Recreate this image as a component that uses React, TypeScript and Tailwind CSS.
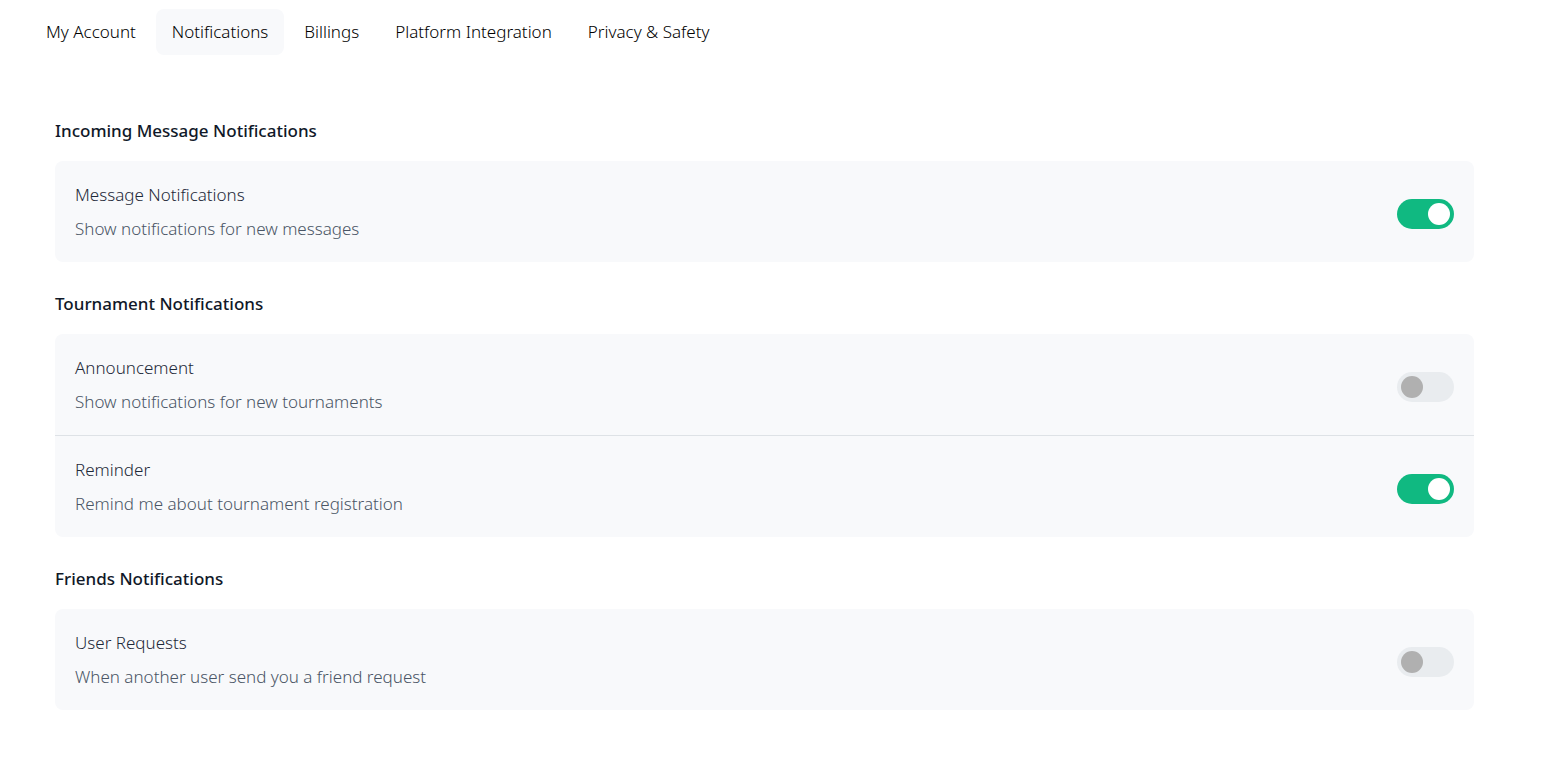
import { useState } from 'react';

type Setting = { id: string; title: string; description: string; enabled: boolean };
type Section = { title: string; settings: Setting[] };

const tabs = ['My Account', 'Notifications', 'Billings', 'Platform Integration', 'Privacy & Safety'];

const sections: Section[] = [
  {
    title: 'Incoming Message Notifications',
    settings: [
      { id: 'messages', title: 'Message Notifications', description: 'Show notifications for new messages', enabled: true },
    ],
  },
  {
    title: 'Tournament Notifications',
    settings: [
      { id: 'announcement', title: 'Announcement', description: 'Show notifications for new tournaments', enabled: false },
      { id: 'reminder', title: 'Reminder', description: 'Remind me about tournament registration', enabled: true },
    ],
  },
  {
    title: 'Friends Notifications',
    settings: [
      { id: 'requests', title: 'User Requests', description: 'When another user send you a friend request', enabled: false },
    ],
  },
];

function SettingRow({ setting }: { setting: Setting }) {
  const [enabled, setEnabled] = useState(setting.enabled);
  return (
    <div className="flex items-center justify-between px-5 pt-[17px] pb-4">
      <label htmlFor={setting.id} className="flex flex-col text-[17px] leading-[34px] font-light">
        <span className="text-gray-800">{setting.title}</span>
        <span className="text-gray-600">{setting.description}</span>
      </label>
      <input
        id={setting.id}
        type="checkbox"
        role="switch"
        checked={enabled}
        onChange={(e) => setEnabled(e.target.checked)}
        className="mt-1 flex h-[30px] w-[57px] shrink-0 cursor-pointer appearance-none items-center rounded-full bg-[#e9ecef] px-1 before:size-[22px] before:rounded-full before:bg-[#b0b0b0] before:content-[''] checked:justify-end checked:bg-[#10b981] checked:before:bg-white"
      />
    </div>
  );
}

export default function App() {
  const [active, setActive] = useState('Notifications');
  return (
    <main className="bg-white pr-[72px] pl-[55px] font-['Noto_Sans',sans-serif] text-gray-900">
      <nav className="-ml-[25px] flex gap-1 pt-[9px]">
        {tabs.map((tab) => (
          <button
            key={tab}
            type="button"
            onClick={() => setActive(tab)}
            className={`h-[46px] rounded-lg px-4 text-[17px] font-light text-black ${active === tab ? 'bg-[#f8f9fb]' : ''}`}
          >
            {tab}
          </button>
        ))}
      </nav>
      <div className="flex flex-col gap-7 pt-[62px]">
        {sections.map((section) => (
          <section key={section.title}>
            <h2 className="text-[17px] leading-7 font-medium">{section.title}</h2>
            <div className="mt-4 divide-y divide-[#dee2e6] rounded-lg bg-[#f8f9fb]">
              {section.settings.map((setting) => (
                <SettingRow key={setting.id} setting={setting} />
              ))}
            </div>
          </section>
        ))}
      </div>
    </main>
  );
}
